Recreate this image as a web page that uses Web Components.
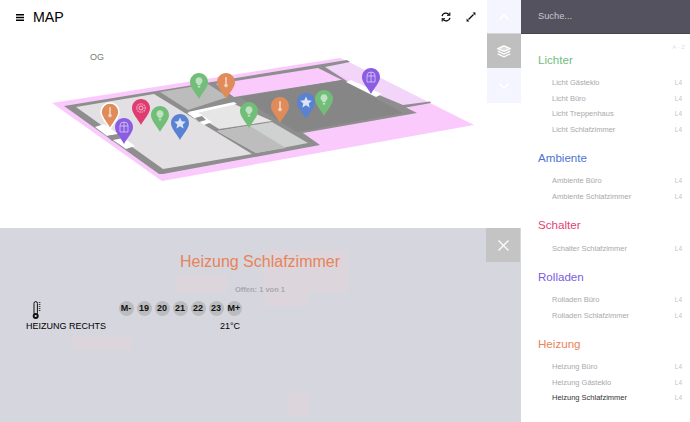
<!DOCTYPE html>
<html lang="de"><head><meta charset="utf-8"><title>MAP</title>
<style>
html,body{margin:0;padding:0;width:690px;height:422px;overflow:hidden;background:#fff;font-family:"Liberation Sans",Arial,sans-serif}
</style></head><body>
<app-shell>
  <map-view>
    <map-pin kind="bulb" color="#72be78" style="--x:199px;--y:73px"></map-pin>
    <map-pin kind="thermo" color="#e08b5a" style="--x:226px;--y:73px"></map-pin>
    <map-pin kind="thermo" color="#e08b5a" ring style="--x:110px;--y:103px"></map-pin>
    <map-pin kind="window" color="#8a5de2" style="--x:124px;--y:118px"></map-pin>
    <map-pin kind="gear" color="#e03c72" style="--x:141px;--y:99px"></map-pin>
    <map-pin kind="bulb" color="#72be78" style="--x:160px;--y:106px"></map-pin>
    <map-pin kind="star" color="#5a82d2" style="--x:180px;--y:114px"></map-pin>
    <map-pin kind="bulb" color="#72be78" style="--x:249px;--y:102px"></map-pin>
    <map-pin kind="thermo" color="#e08b5a" style="--x:280px;--y:97px"></map-pin>
    <map-pin kind="star" color="#5a82d2" style="--x:306px;--y:93px"></map-pin>
    <map-pin kind="bulb" color="#72be78" style="--x:324px;--y:90px"></map-pin>
    <map-pin kind="window" color="#8a5de2" style="--x:371px;--y:68px"></map-pin>
  </map-view>
  <detail-panel slot="panel"></detail-panel>
  <side-bar slot="side">
    <side-group label="Lichter" color="#70bd83">
      <side-item>Licht Gästeklo</side-item><side-item>Licht Büro</side-item><side-item>Licht Treppenhaus</side-item><side-item>Licht Schlafzimmer</side-item>
    </side-group>
    <side-group label="Ambiente" color="#4d74cf">
      <side-item>Ambiente Büro</side-item><side-item>Ambiente Schlafzimmer</side-item>
    </side-group>
    <side-group label="Schalter" color="#e23f72">
      <side-item>Schalter Schlafzimmer</side-item>
    </side-group>
    <side-group label="Rolladen" color="#7d5ce0">
      <side-item>Rolladen Büro</side-item><side-item>Rolladen Schlafzimmer</side-item>
    </side-group>
    <side-group label="Heizung" color="#e8835a">
      <side-item>Heizung Büro</side-item><side-item>Heizung Gästeklo</side-item><side-item active>Heizung Schlafzimmer</side-item>
    </side-group>
  </side-bar>
</app-shell>
<script>
function def(name, html, extra){
  const t=document.createElement('template'); t.innerHTML=html;
  customElements.define(name, class extends HTMLElement{
    connectedCallback(){
      if(this.shadowRoot) return;
      const r=this.attachShadow({mode:'open'});
      r.appendChild(t.content.cloneNode(true));
      if(extra) extra(this,r);
    }
  });
}
def('app-shell',`<style>
:host{display:grid;grid-template-columns:521px 169px;grid-template-rows:228px 194px;width:690px;height:422px}
.side{grid-column:2;grid-row:1/3;display:block;min-height:0}
</style><slot></slot><slot name="panel"></slot><slot name="side" class="side"></slot>`);

def('map-view',`<style>
:host{display:flex;grid-column:1;grid-row:1;background:#fff;min-width:0}
.canvas{position:relative;flex:1;min-width:0}
.plan{position:absolute;left:0;top:0;width:486px;height:228px}
header{position:relative;display:flex;align-items:center;height:34px;padding-left:16px;color:#000}
.t{font-size:14.2px;margin-left:9px;line-height:34px}
.sp{flex:1}
svg.i{display:block}
.og{position:relative;font-size:9px;color:#777;margin:18px 0 0 90px;line-height:10px}
.act{display:flex;gap:15px;padding-right:11px}
</style>
<div class="canvas">
<svg class="plan" viewBox="0 0 486 228" aria-hidden="true">
 <polygon points="52,103 340,58 474,125 162,181" fill="#fbcafd"/>
 <polygon points="325,67 347,61 428,102 404,106" fill="#f3d5fa"/>
 <polygon points="64,106 347,60 350,62 325,67 350,83 403,105 430,101.5 431,103 406,107.5 417,113 303,133 320,145 163,174 159,174" fill="#8e8e8e"/>
 <polygon points="76,107 154,94 252,154 163,169" fill="#e2e0e3"/>
 <polygon points="160,92 208,84 228,97 188,110" fill="#bcbcbc"/>
 <polygon points="216,84 318,68 342,80 234,97" fill="#fbcafd"/>
 <polygon points="240,97 342,80 403,113 297,132" fill="#858685"/>
 <polygon points="193,113 234,104 272,121 219,129" fill="#e6e6e6"/>
 <polygon points="188,112 234,102 237,104 192,114" fill="#fff"/>
 <polygon points="217,131 272,122 308,143 256,153" fill="#cfd2d0"/>
 <polygon points="217,131 250,126 286,148 256,153" fill="#bdbdbd"/>
 <polygon points="187,113 196,111 212,122 204,125" fill="#fff"/>
 <polygon points="195,118 202,116 206,120 199,122" fill="#8e8e8e"/>
 <polygon points="95,127 104,124 118,134 107,136" fill="#fff"/>
 <polygon points="107,136 118,134 121,140 112,141" fill="#8e8e8e"/>
 <polygon points="113,140 124,138 135,146 126,149" fill="#fff"/>
 <polygon points="346,82 351,80 382,94 376,97" fill="#fff"/>
</svg>
<header>
 <svg class="i" width="8" height="7" viewBox="0 0 8 7"><path d="M0 .8h8M0 3.5h8M0 6.2h8" stroke="#000" stroke-width="1.4"/></svg>
 <span class="t">MAP</span><span class="sp"></span>
 <div class="act">
  <svg class="i" width="10" height="10" viewBox="0 0 10 10" fill="none" stroke="#000" stroke-width="1.3"><path d="M1 4.2A4 4 0 0 1 8 2.6"/><path d="M9 5.8A4 4 0 0 1 2 7.4"/><path d="M8.8 .4V3.2H6" stroke-width="1.1"/><path d="M1.2 9.6V6.8H4" stroke-width="1.1"/></svg>
  <svg class="i" width="10" height="10" viewBox="0 0 10 10"><path d="M2.5 7.5L7.5 2.5" stroke="#000" stroke-width="1.3"/><path d="M6.6 .6h2.8v2.8zM.6 6.6v2.8h2.8z" fill="#000"/></svg>
 </div>
</header>
<div class="og">OG</div>
<slot></slot>
</div>
<rail-bar></rail-bar>`);

def('rail-bar',`<style>
:host{display:block;width:34px;height:103px;background:#f5f5ff;flex:none}
.b{height:33px;display:flex;align-items:center;justify-content:center}
.m{height:35px;background:#bfbfbf;border-top:1px solid #d8d8d8;box-sizing:border-box;display:flex;align-items:center;justify-content:center}
.d{height:35px;display:flex;align-items:center;justify-content:center}
</style>
<div class="b"><svg width="10" height="6" viewBox="0 0 10 6" fill="none" stroke="#fff" stroke-width="1.6"><path d="M.6 5.4L5 1l4.4 4.4"/></svg></div>
<div class="m"><svg width="14" height="13" viewBox="0 0 14 13" fill="none" stroke="#fff" stroke-width="1.3"><path d="M7 .8L13.2 3.6 7 6.4.8 3.6z" fill="#fff" fill-opacity=".45"/><path d="M.8 6.2L7 9l6.2-2.8"/><path d="M.8 8.8L7 11.8l6.2-3"/></svg></div>
<div class="d"><svg width="10" height="6" viewBox="0 0 10 6" fill="none" stroke="#fff" stroke-width="1.6"><path d="M.6 .6L5 5l4.4-4.4"/></svg></div>`);

const icons={
 bulb:'<path d="M9 4.2a3.5 3.5 0 0 1 2.2 6.2c-.6.5-.8 1.1-.8 1.9H7.6c0-.8-.2-1.4-.8-1.9A3.5 3.5 0 0 1 9 4.2z" fill="#fff" fill-opacity=".55"/><rect x="7.8" y="13" width="2.4" height="1.6" fill="#fff" fill-opacity=".55"/>',
 thermo:'<rect x="8.2" y="4" width="1.6" height="7.5" rx=".8" fill="#fff" fill-opacity=".62"/><circle cx="9" cy="12.6" r="1.8" fill="#fff" fill-opacity=".62"/>',
 star:'<path d="M9 3.6l1.7 3.7 4.1.4-3.1 2.7.9 4L9 12.3l-3.6 2.1.9-4-3.1-2.7 4.1-.4z" fill="#fff" fill-opacity=".78"/>',
 gear:'<circle cx="9" cy="9" r="2" fill="none" stroke="#fff" stroke-opacity=".65"/><circle cx="9" cy="9" r="4.2" fill="none" stroke="#fff" stroke-opacity=".6" stroke-dasharray="1.4 .8" stroke-width="1.2"/>',
 window:'<path d="M5 14V7.5a4 3.5 0 0 1 8 0V14zM9 4v10M5 8h8" fill="none" stroke="#fff" stroke-opacity=".6" stroke-width=".9"/>'
};
def('map-pin',`<style>
:host{position:absolute;left:calc(var(--x) - 9px);top:var(--y);width:18px;height:26px;display:block}
svg{display:block;overflow:visible}
</style><svg width="18" height="26" viewBox="0 0 18 26"></svg>`,(el,r)=>{
  const s=r.querySelector('svg'), ring=el.hasAttribute('ring')?' stroke="#fff" stroke-width="1.6"':'';
  s.innerHTML='<path d="M9 0C14 0 18 4 18 9.2C18 14.5 12 20 9 26C6 20 0 14.5 0 9.2C0 4 4 0 9 0Z" fill="'+el.getAttribute('color')+'"'+ring+'/>'+icons[el.getAttribute('kind')];
});

def('detail-panel',`<style>
:host{display:block;position:relative;grid-column:1;grid-row:2;background:#d5d6de;color:#000;overflow:hidden}
.ghost{position:absolute;left:0;top:0;width:521px;height:194px}
.wrap{position:relative;display:flex;flex-direction:column}
h1{margin:0;font-weight:400;font-size:16px;line-height:20px;color:#e8835a;text-align:center;padding-top:24px;width:520px}
.sub{font-size:7.5px;font-weight:700;line-height:10px;color:#a8a8ac;text-align:center;width:520px;margin-top:13px}
.close{position:absolute;right:1px;top:0;width:34px;height:34px;background:#c4c4c4;display:flex;align-items:center;justify-content:center}
</style>
<svg class="ghost" viewBox="0 0 521 194" aria-hidden="true" fill="#dcd6dc">
 <rect x="176" y="47" width="51" height="18"/><rect x="71" y="108" width="60" height="14"/>
 <rect x="263" y="22" width="85" height="43"/><rect x="263" y="65" width="45" height="13"/><rect x="288" y="165" width="20" height="22"/>
</svg>
<div class="wrap">
 <h1>Heizung Schlafzimmer</h1>
 <div class="sub">Offen: 1 von 1</div>
 <device-row></device-row>
</div>
<div class="close"><svg width="11" height="11" viewBox="0 0 11 11" stroke="#fff" stroke-width="1.2"><path d="M.5 .5l10 10M10.5 .5l-10 10"/></svg></div>`);

def('device-row',`<style>
:host{display:grid;grid-template-columns:1fr auto;justify-content:start;width:214px;margin:6px 0 0 26px;font-size:9px;line-height:12px;color:#000}
.ic{padding-left:6px;height:19px;display:block}
.btns{display:flex;gap:3px;justify-self:end;align-self:start;margin:-.5px -1.5px 0 0}
.lab{white-space:nowrap}
.val{justify-self:end}
</style>
<svg class="ic" width="9" height="19" viewBox="0 0 9 19" fill="none" stroke="#111"><rect x="2" y=".6" width="3.4" height="13" rx="1.7" stroke-width="1"/><circle cx="3.7" cy="15" r="3" fill="#111" stroke="none"/><circle cx="3.7" cy="15" r="1.1" fill="#d5d6de" stroke="none"/><path d="M6.8 1.5h1.6M6.8 3.5h1.6M6.8 5.5h1.6M6.8 7.5h1.6M6.8 9.5h1.6" stroke-width=".8"/></svg>
<div class="btns"><temp-btn>M-</temp-btn><temp-btn>19</temp-btn><temp-btn>20</temp-btn><temp-btn>21</temp-btn><temp-btn>22</temp-btn><temp-btn>23</temp-btn><temp-btn>M+</temp-btn></div>
<div class="lab">HEIZUNG RECHTS</div><div class="val">21°C</div>`);

def('temp-btn',`<style>
:host{display:flex;align-items:center;justify-content:center;width:15px;height:15px;border-radius:50%;background:#bcbcbf;font-size:9px;font-weight:700;color:#111;white-space:nowrap}
</style><slot></slot>`);

def('side-bar',`<style>
:host{display:flex;flex-direction:column;height:422px;background:#fff;overflow:hidden}
.top{height:33px;background:#54525e;border-bottom:1px solid #46454f;padding-left:17px;font-size:9.3px;line-height:33px;color:#c8c8cc;flex:none}
.az{font-size:6px;line-height:8px;color:#e0e0e4;text-align:right;padding-right:5px;margin:9px 0 2px}
.list{display:flex;flex-direction:column;gap:14.3px;padding:0 8px 0 17px}
</style>
<div class="top">Suche...</div>
<div class="az">A - Z</div>
<div class="list"><slot></slot></div>`);

def('side-group',`<style>
:host{display:block}
.h{font-size:11.6px;line-height:14px;margin-bottom:7.9px}
</style><div class="h"></div><slot></slot>`,(el,r)=>{
  const h=r.querySelector('.h'); h.textContent=el.getAttribute('label'); h.style.color=el.getAttribute('color');
});

def('side-item',`<style>
:host{display:flex;justify-content:space-between;align-items:center;height:15.5px;padding-left:14px;font-size:7.5px;color:#a9a9ad}
:host([active]){color:#333}
.l{font-size:6.5px;color:#c4c4c8}
</style><span><slot></slot></span><span class="l">L4</span>`);
</script>
</body></html>
